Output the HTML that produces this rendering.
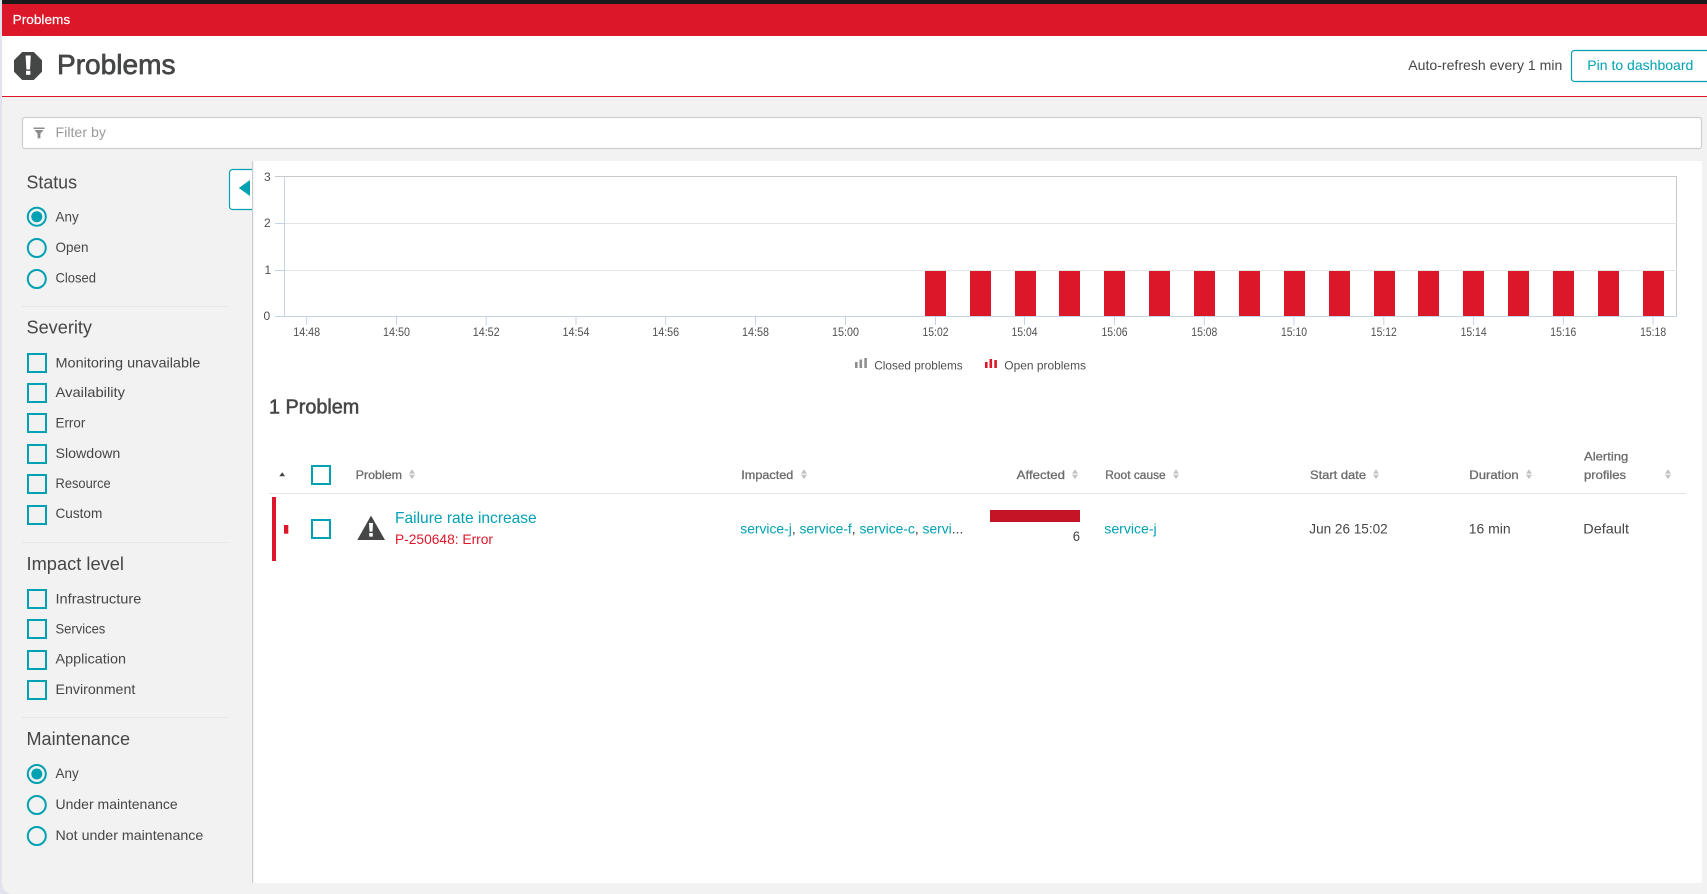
<!DOCTYPE html>
<html lang="en">
<head>
<meta charset="utf-8">
<title>Problems</title>
<style>
html,body{margin:0;padding:0;width:1707px;height:894px;overflow:hidden;background:#f2f2f2}
svg{display:block}
text{font-family:"Liberation Sans",sans-serif;font-size:14px;fill:#454646}
.h{font-size:18px}
.hd{font-size:12px;fill:#6b6b6b;stroke:#6b6b6b;stroke-width:.3}
.ax{font-size:12px;fill:#505050}
.lk{fill:#00a1b2}
.box{fill:none;stroke:#00a1b2;stroke-width:2}
.rd{fill:none;stroke:#00a1b2;stroke-width:2}
.dv{stroke:#e6e6e6;stroke-width:1}
.tk{stroke:#c5d3e8;stroke-width:1}
.bar{fill:#dc172a}
</style>
</head>
<body>
<svg xmlns="http://www.w3.org/2000/svg" width="1707" height="894" viewBox="0 0 1707 894">
<defs>
<g id="s"><path d="M0 5.6 L3 1.2 L6 5.6Z M0 6.8 L3 11.2 L6 6.8Z" fill="#c4c4c4"/></g>
</defs>

<rect x="0" y="0" width="1707" height="894" fill="#e2e2ee"/>
<path d="M2 4 H1707 V894 H14 Q2 894 2 882Z" fill="#f2f2f2"/>

<rect x="2" y="0" width="1705" height="4" fill="#1b1b1b"/>
<rect x="2" y="4" width="1705" height="32" fill="#dc172a"/>
<text x="12.7" y="24" textLength="57.5" lengthAdjust="spacingAndGlyphs" style="font-size:13px;fill:#fff;stroke:#fff;stroke-width:.2">Problems</text>

<rect x="2" y="36" width="1705" height="60" fill="#fff"/>
<rect x="2" y="96" width="1705" height="1" fill="#dc172a"/>
<path d="M22.2 52 H33.8 L42 60.2 V71.8 L33.8 80 H22.2 L14 71.8 V60.2Z" fill="#454646"/>
<path d="M25.6 55.5 H30.8 L30 69.5 H26.4Z" fill="#fff"/>
<rect x="26" y="70.8" width="4.4" height="4" fill="#fff"/>
<text x="57" y="74" textLength="118.5" lengthAdjust="spacingAndGlyphs" style="font-size:28px;stroke:#454646;stroke-width:.7">Problems</text>
<text x="1408.3" y="70" textLength="154" lengthAdjust="spacingAndGlyphs">Auto-refresh every 1 min</text>
<rect x="1571.5" y="50.5" width="150" height="31" rx="3" fill="#fff" stroke="#00a1b2" stroke-width="1.2"/>
<text class="lk" x="1587.3" y="70" textLength="106" lengthAdjust="spacingAndGlyphs">Pin to dashboard</text>

<rect x="22.5" y="117.5" width="1679" height="31" rx="2.5" fill="#fff" stroke="#cfcfcf" stroke-width="1.2"/>
<path d="M33.5 127.5 H44.5 V129 H33.5Z M34.5 130 H43.5 L40.4 133.8 V138.4 H37.6 V133.8Z" fill="#8c8c8c"/>
<text x="55.5" y="137" textLength="50.5" lengthAdjust="spacingAndGlyphs" style="fill:#9a9a9a">Filter by</text>

<rect x="229.5" y="169.5" width="30" height="40" rx="3" fill="#fff" stroke="#00a1b2" stroke-width="1.2"/>
<rect x="252" y="161" width="1450" height="722" rx="2" fill="#fff"/>
<rect x="252" y="161" width="1.2" height="722" fill="#cbcbcb"/>
<path d="M250 180 V196 L238.8 188Z" fill="#00a1b2"/>

<!-- sidebar -->
<text class="h" x="26.5" y="188.3" textLength="50.5" lengthAdjust="spacingAndGlyphs">Status</text>
<circle class="rd" cx="36.8" cy="216.7" r="9"/><circle cx="36.8" cy="216.7" r="5.5" fill="#00a1b2"/>
<text x="55.5" y="221.3" textLength="23.2" lengthAdjust="spacingAndGlyphs">Any</text>
<circle class="rd" cx="36.8" cy="248" r="9"/>
<text x="55.5" y="252" textLength="33" lengthAdjust="spacingAndGlyphs">Open</text>
<circle class="rd" cx="36.8" cy="279" r="9"/>
<text x="55.5" y="282.5" textLength="40.5" lengthAdjust="spacingAndGlyphs">Closed</text>

<line class="dv" x1="22" x2="229" y1="306.5" y2="306.5"/>
<text class="h" x="26.5" y="333.7" textLength="65.5" lengthAdjust="spacingAndGlyphs">Severity</text>
<rect class="box" x="28" y="354" width="18" height="18"/>
<text x="55.5" y="367.3" textLength="144.8" lengthAdjust="spacingAndGlyphs">Monitoring unavailable</text>
<rect class="box" x="28" y="384" width="18" height="18"/>
<text x="55.5" y="397" textLength="69.5" lengthAdjust="spacingAndGlyphs">Availability</text>
<rect class="box" x="28" y="414" width="18" height="18"/>
<text x="55.5" y="427.3" textLength="29.8" lengthAdjust="spacingAndGlyphs">Error</text>
<rect class="box" x="28" y="445" width="18" height="18"/>
<text x="55.5" y="458" textLength="64.8" lengthAdjust="spacingAndGlyphs">Slowdown</text>
<rect class="box" x="28" y="475" width="18" height="18"/>
<text x="55.5" y="488" textLength="55.2" lengthAdjust="spacingAndGlyphs">Resource</text>
<rect class="box" x="28" y="506" width="18" height="18"/>
<text x="55.5" y="518" textLength="46.8" lengthAdjust="spacingAndGlyphs">Custom</text>

<line class="dv" x1="22" x2="229" y1="542.5" y2="542.5"/>
<text class="h" x="26.5" y="570" textLength="97.5" lengthAdjust="spacingAndGlyphs">Impact level</text>
<rect class="box" x="28" y="590" width="18" height="18"/>
<text x="55.5" y="603.3" textLength="85.8" lengthAdjust="spacingAndGlyphs">Infrastructure</text>
<rect class="box" x="28" y="620" width="18" height="18"/>
<text x="55.5" y="633.3" textLength="49.8" lengthAdjust="spacingAndGlyphs">Services</text>
<rect class="box" x="28" y="651" width="18" height="18"/>
<text x="55.5" y="663.3" textLength="70.5" lengthAdjust="spacingAndGlyphs">Application</text>
<rect class="box" x="28" y="681" width="18" height="18"/>
<text x="55.5" y="694" textLength="79.8" lengthAdjust="spacingAndGlyphs">Environment</text>

<line class="dv" x1="22" x2="229" y1="717.5" y2="717.5"/>
<text class="h" x="26.5" y="745" textLength="103.5" lengthAdjust="spacingAndGlyphs">Maintenance</text>
<circle class="rd" cx="36.8" cy="774" r="9"/><circle cx="36.8" cy="774" r="5.5" fill="#00a1b2"/>
<text x="55.5" y="778" textLength="23.2" lengthAdjust="spacingAndGlyphs">Any</text>
<circle class="rd" cx="36.8" cy="805" r="9"/>
<text x="55.5" y="809" textLength="122.2" lengthAdjust="spacingAndGlyphs">Under maintenance</text>
<circle class="rd" cx="36.8" cy="836" r="9"/>
<text x="55.5" y="840" textLength="147.8" lengthAdjust="spacingAndGlyphs">Not under maintenance</text>

<!-- chart -->
<line x1="275" x2="1677" y1="176.5" y2="176.5" stroke="#c8c8c8"/>
<line x1="1676.5" x2="1676.5" y1="176" y2="316" stroke="#c8c8c8"/>
<line x1="284" x2="1677" y1="223.5" y2="223.5" stroke="#e4e4e4"/>
<line x1="284" x2="1677" y1="270.5" y2="270.5" stroke="#e4e4e4"/>
<line class="tk" x1="284.5" x2="284.5" y1="176" y2="316"/>
<line class="tk" x1="275" x2="284" y1="223.5" y2="223.5"/>
<line class="tk" x1="275" x2="284" y1="270.5" y2="270.5"/>
<line class="tk" x1="275" x2="1677" y1="316.5" y2="316.5"/>
<text class="ax" x="264" y="181">3</text>
<text class="ax" x="264" y="227">2</text>
<text class="ax" x="264.5" y="274">1</text>
<text class="ax" x="263.5" y="320">0</text>

<g class="bar">
<rect x="925" y="271" width="21" height="45"/><rect x="970" y="271" width="21" height="45"/>
<rect x="1015" y="271" width="21" height="45"/><rect x="1059" y="271" width="21" height="45"/>
<rect x="1104" y="271" width="21" height="45"/><rect x="1149" y="271" width="21" height="45"/>
<rect x="1194" y="271" width="21" height="45"/><rect x="1239" y="271" width="21" height="45"/>
<rect x="1284" y="271" width="21" height="45"/><rect x="1329" y="271" width="21" height="45"/>
<rect x="1374" y="271" width="21" height="45"/><rect x="1418" y="271" width="21" height="45"/>
<rect x="1463" y="271" width="21" height="45"/><rect x="1508" y="271" width="21" height="45"/>
<rect x="1553" y="271" width="21" height="45"/><rect x="1598" y="271" width="21" height="45"/>
<rect x="1643" y="271" width="21" height="45"/>
</g>

<g class="tk">
<line x1="306.7" x2="306.7" y1="316" y2="325"/><line x1="396.5" x2="396.5" y1="316" y2="325"/>
<line x1="486.2" x2="486.2" y1="316" y2="325"/><line x1="576" x2="576" y1="316" y2="325"/>
<line x1="665.7" x2="665.7" y1="316" y2="325"/><line x1="755.5" x2="755.5" y1="316" y2="325"/>
<line x1="845.5" x2="845.5" y1="316" y2="325"/><line x1="935.5" x2="935.5" y1="316" y2="325"/>
<line x1="1024.5" x2="1024.5" y1="316" y2="325"/><line x1="1114.5" x2="1114.5" y1="316" y2="325"/>
<line x1="1204.3" x2="1204.3" y1="316" y2="325"/><line x1="1294" x2="1294" y1="316" y2="325"/>
<line x1="1383.8" x2="1383.8" y1="316" y2="325"/><line x1="1473.6" x2="1473.6" y1="316" y2="325"/>
<line x1="1563.3" x2="1563.3" y1="316" y2="325"/><line x1="1653.1" x2="1653.1" y1="316" y2="325"/>
</g>
<text class="ax" x="293.2" y="336" textLength="27" lengthAdjust="spacingAndGlyphs">14:48</text>
<text class="ax" x="383" y="336" textLength="27" lengthAdjust="spacingAndGlyphs">14:50</text>
<text class="ax" x="472.7" y="336" textLength="27" lengthAdjust="spacingAndGlyphs">14:52</text>
<text class="ax" x="562.5" y="336" textLength="27" lengthAdjust="spacingAndGlyphs">14:54</text>
<text class="ax" x="652.2" y="336" textLength="27" lengthAdjust="spacingAndGlyphs">14:56</text>
<text class="ax" x="742" y="336" textLength="27" lengthAdjust="spacingAndGlyphs">14:58</text>
<text class="ax" x="832" y="336" textLength="27" lengthAdjust="spacingAndGlyphs">15:00</text>
<text class="ax" x="922.5" y="336" textLength="26" lengthAdjust="spacingAndGlyphs">15:02</text>
<text class="ax" x="1011.5" y="336" textLength="26" lengthAdjust="spacingAndGlyphs">15:04</text>
<text class="ax" x="1101.5" y="336" textLength="26" lengthAdjust="spacingAndGlyphs">15:06</text>
<text class="ax" x="1191.3" y="336" textLength="26" lengthAdjust="spacingAndGlyphs">15:08</text>
<text class="ax" x="1281" y="336" textLength="26" lengthAdjust="spacingAndGlyphs">15:10</text>
<text class="ax" x="1370.8" y="336" textLength="26" lengthAdjust="spacingAndGlyphs">15:12</text>
<text class="ax" x="1460.6" y="336" textLength="26" lengthAdjust="spacingAndGlyphs">15:14</text>
<text class="ax" x="1550.3" y="336" textLength="26" lengthAdjust="spacingAndGlyphs">15:16</text>
<text class="ax" x="1640.1" y="336" textLength="26" lengthAdjust="spacingAndGlyphs">15:18</text>

<g fill="#8f8f8f"><rect x="855" y="362" width="2.6" height="6"/><rect x="859.5" y="359.5" width="2.6" height="8.5"/><rect x="864.3" y="358" width="2.6" height="10"/></g>
<text class="ax" x="874.3" y="369.3" textLength="88.4" lengthAdjust="spacingAndGlyphs">Closed problems</text>
<g fill="#dc172a"><rect x="985" y="362" width="2.6" height="6"/><rect x="989.5" y="359" width="2.6" height="9"/><rect x="994.3" y="360" width="2.6" height="8"/></g>
<text class="ax" x="1004.3" y="369.3" textLength="81.7" lengthAdjust="spacingAndGlyphs">Open problems</text>

<text x="269" y="413.3" textLength="90.3" lengthAdjust="spacingAndGlyphs" style="font-size:20px;stroke:#454646;stroke-width:.55">1 Problem</text>

<!-- table header -->
<path d="M279.3 476.3 L282.2 472.3 L285.1 476.3Z" fill="#454646"/>
<rect class="box" x="312" y="466" width="18" height="18"/>
<text class="hd" x="355.7" y="479" textLength="46.3" lengthAdjust="spacingAndGlyphs">Problem</text><use href="#s" x="409" y="468"/>
<text class="hd" x="741.3" y="479" textLength="52" lengthAdjust="spacingAndGlyphs">Impacted</text><use href="#s" x="801" y="468"/>
<text class="hd" x="1016.7" y="479" textLength="48.3" lengthAdjust="spacingAndGlyphs">Affected</text><use href="#s" x="1072" y="468"/>
<text class="hd" x="1105.3" y="479" textLength="60.4" lengthAdjust="spacingAndGlyphs">Root cause</text><use href="#s" x="1173" y="468"/>
<text class="hd" x="1310" y="479" textLength="56" lengthAdjust="spacingAndGlyphs">Start date</text><use href="#s" x="1373" y="468"/>
<text class="hd" x="1469.3" y="479" textLength="49.4" lengthAdjust="spacingAndGlyphs">Duration</text><use href="#s" x="1526" y="468"/>
<text class="hd" x="1584" y="460.7" textLength="44.3" lengthAdjust="spacingAndGlyphs">Alerting</text>
<text class="hd" x="1584" y="479" textLength="42" lengthAdjust="spacingAndGlyphs">profiles</text><use href="#s" x="1665" y="468"/>
<line x1="269" x2="1686" y1="493.5" y2="493.5" stroke="#e4e4e4"/>

<!-- row -->
<rect x="272" y="497" width="4" height="64" fill="#dc172a"/>
<rect x="284" y="525" width="4.3" height="8.7" fill="#dc172a"/>
<rect class="box" x="312" y="520" width="18" height="18"/>
<path d="M371 516 Q371.3 516 371.6 516.6 L385 540 H357.3 L370.4 516.6 Q370.7 516 371 516Z" fill="#454646"/>
<path d="M369 523 H373 L372.5 531.6 H369.5Z" fill="#fff"/>
<rect x="369.2" y="533" width="3.6" height="3.6" fill="#fff"/>
<text class="lk" x="395" y="523" textLength="141.7" lengthAdjust="spacingAndGlyphs" style="font-size:16px">Failure rate increase</text>
<text x="395" y="544" textLength="98" lengthAdjust="spacingAndGlyphs" style="fill:#dc172a">P-250648: Error</text>
<text x="740.3" y="533.3" textLength="223" lengthAdjust="spacingAndGlyphs"><tspan class="lk">service-j</tspan>, <tspan class="lk">service-f</tspan>, <tspan class="lk">service-c</tspan>, <tspan class="lk">servi</tspan>...</text>
<rect x="990" y="510" width="90" height="12" fill="#c41425"/>
<text x="1072.7" y="541" textLength="7.3" lengthAdjust="spacingAndGlyphs">6</text>
<text class="lk" x="1104.3" y="533.3" textLength="52.4" lengthAdjust="spacingAndGlyphs">service-j</text>
<text x="1309.3" y="533.3" textLength="78.4" lengthAdjust="spacingAndGlyphs">Jun 26 15:02</text>
<text x="1468.7" y="533.3" textLength="42" lengthAdjust="spacingAndGlyphs">16 min</text>
<text x="1583.3" y="533.3" textLength="45.7" lengthAdjust="spacingAndGlyphs">Default</text>
</svg>
</body>
</html>
